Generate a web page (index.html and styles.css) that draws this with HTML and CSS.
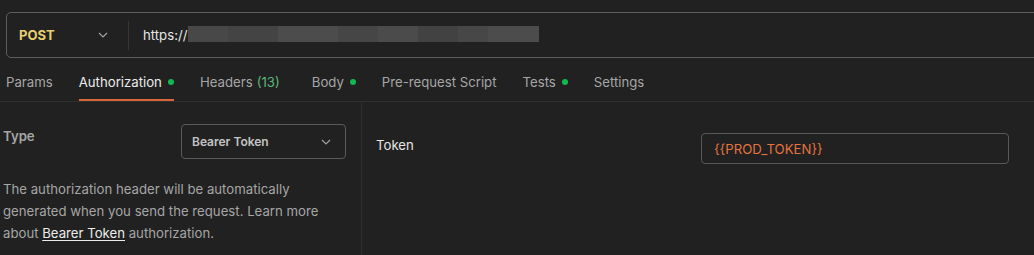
FILE: index.html
```html
<!DOCTYPE html>
<html>
<head>
<meta charset="utf-8">
<link rel="stylesheet" href="styles.css">
</head>
<body>
<div class="app">
  <div class="urlbar">
    <div class="urlbox">
      <div class="method">
        <span class="method-name">POST</span>
        <svg class="chev" width="10" height="6" viewBox="0 0 10 6"><path d="M1 1l4 4 4-4" fill="none" stroke="#a0a0a0" stroke-width="1.2"/></svg>
      </div>
      <div class="url">
        <span class="url-text">https://</span>
        <span class="blur"></span>
      </div>
    </div>
  </div>
  <div class="tabs">
    <div class="tab">Params</div>
    <div class="tab active">Authorization<span class="dot"></span></div>
    <div class="tab">Headers <span class="count">(13)</span></div>
    <div class="tab tab-body">Body<span class="dot"></span></div>
    <div class="tab">Pre-request Script</div>
    <div class="tab">Tests<span class="dot"></span></div>
    <div class="tab">Settings</div>
  </div>
  <div class="content">
    <div class="left">
      <div class="type-row">
        <div class="type-label">Type</div>
        <div class="select">
          <span>Bearer Token</span>
          <svg class="chev" width="10" height="6" viewBox="0 0 10 6"><path d="M1 1l4 4 4-4" fill="none" stroke="#a0a0a0" stroke-width="1.2"/></svg>
        </div>
      </div>
      <p class="desc">The authorization header will be automatically generated when you send the request. Learn more about <a class="link">Bearer Token</a> authorization.</p>
    </div>
    <div class="right">
      <div class="token-row">
        <div class="token-label">Token</div>
        <div class="token-input">{{PROD_TOKEN}}</div>
      </div>
    </div>
  </div>
</div>
</body>
</html>
```

FILE: styles.css
```css
* { box-sizing: border-box; }
html, body {
  margin: 0;
  padding: 0;
  background: #212121;
  overflow: hidden;
}
body {
  font-family: Inter, "Noto Sans", sans-serif;
  font-size: 13.2px;
  color: #a6a6a6;
  width: 1034px;
  height: 255px;
}
.urlbar {
  padding: 12px 0 0 6px;
  height: 58px;
}
.urlbox {
  display: flex;
  width: 1040px;
  height: 46px;
  border: 1px solid #5e5e5e;
  border-radius: 5px;
  align-items: center;
}
.method {
  width: 121px;
  display: flex;
  align-items: center;
  justify-content: space-between;
  padding: 0 20px 0 12px;
  height: 100%;
}
.method-name {
  color: #e8cf72;
  font-weight: 700;
  font-size: 13px;
}
.chev { display: block; }
.url {
  height: 29px;
  border-left: 1px solid #363636;
  display: flex;
  align-items: center;
  padding-left: 14px;
}
.url-text {
  color: #e6e6e6;
  font-size: 13.2px;
}
.blur {
  display: block;
  width: 351px;
  height: 16px;
  margin-left: 1px;
  margin-top: -3px;
  background: linear-gradient(90deg,
    #484848 0px, #484848 40px,
    #444 40px, #444 90px,
    #4c4c4c 90px, #4c4c4c 150px,
    #464646 150px, #464646 190px,
    #4b4b4b 190px, #4b4b4b 230px,
    #424242 230px, #424242 270px,
    #474747 270px, #474747 300px,
    #4c4c4c 300px, #4c4c4c 351px);
}
.tabs {
  display: flex;
  gap: 26px;
  padding-left: 6px;
  height: 44px;
  border-bottom: 1px solid #2f2f2f;
}
.tab {
  display: flex;
  align-items: flex-start;
  padding-top: 16px;
  line-height: 16px;
  height: 43px;
  color: #a6a6a6;
  border-bottom: 2px solid transparent;
  white-space: nowrap;
}
.tab.active {
  color: #ececec;
  border-bottom-color: #d9653a;
}
.tab-body { margin-left: 6px; }
.count { color: #5bb878; margin-left: 4px; }
.dot {
  width: 6px;
  height: 6px;
  border-radius: 50%;
  background: #12b953;
  margin: 5px 0 0 6px;
}
.content {
  display: flex;
  height: 153px;
}
.left {
  width: 364px;
  padding: 22px 15px 0 3px;
  border-right: 1px solid #2f2f2f;
}
.type-row {
  display: flex;
  justify-content: space-between;
}
.type-label {
  font-weight: 600;
  color: #a6a6a6;
  line-height: 16px;
  margin-top: 4px;
}
.select {
  width: 165px;
  height: 35px;
  border: 1px solid #5a5a5a;
  border-radius: 4px;
  display: flex;
  align-items: center;
  justify-content: space-between;
  padding: 0 14px 0 10px;
  font-weight: 600;
  color: #c4c4c4;
  font-size: 12px;
}
.desc {
  margin: 19px 0 0;
  line-height: 22px;
  color: #a6a6a6;
}
.link {
  color: #ececec;
  text-decoration: underline;
  text-underline-offset: 2px;
}
.right {
  flex: 1;
  padding: 31px 25px 0 14px;
}
.token-row {
  display: flex;
}
.token-label {
  width: 325px;
  color: #e6e6e6;
  line-height: 16px;
  margin-top: 4px;
}
.token-input {
  width: 308px;
  height: 31px;
  border: 1px solid #585858;
  border-radius: 4px;
  display: flex;
  align-items: center;
  padding-left: 12px;
  color: #e4733f;
}
```
